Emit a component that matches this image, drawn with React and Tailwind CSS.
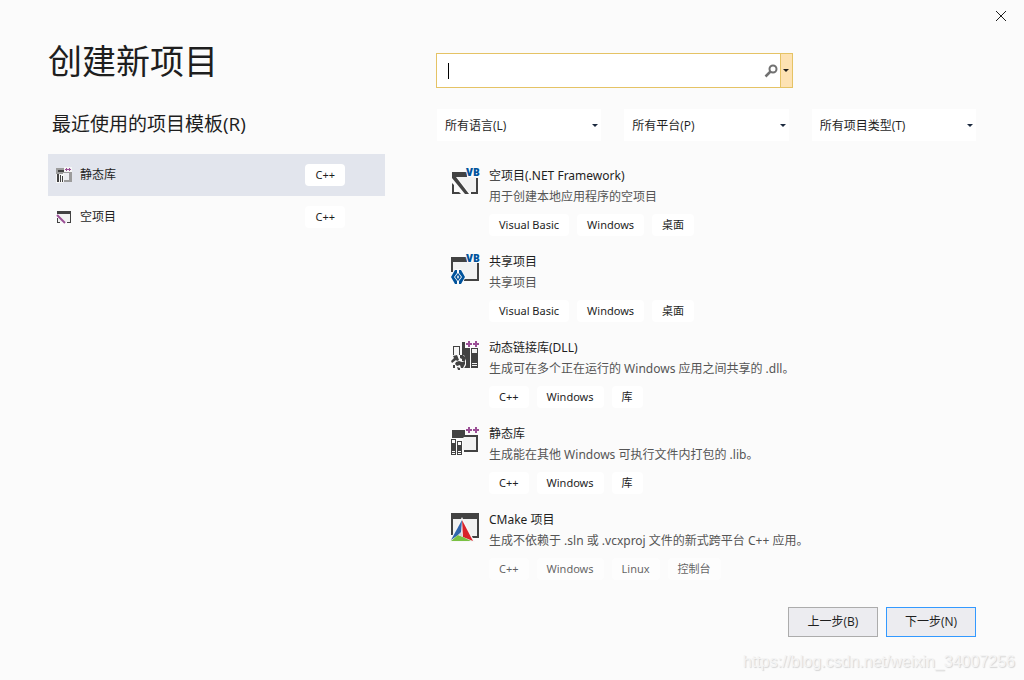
import { useState } from 'react';

const recentTemplates = [
  { name: '静态库', tag: 'C++', Icon: SmallLibraryIcon },
  { name: '空项目', tag: 'C++', Icon: SmallEmptyIcon },
];

const filters = [
  { id: 'language', label: '所有语言(L)' },
  { id: 'platform', label: '所有平台(P)' },
  { id: 'type', label: '所有项目类型(T)' },
];

const templates = [
  {
    name: '空项目(.NET Framework)',
    description: '用于创建本地应用程序的空项目',
    tags: ['Visual Basic', 'Windows', '桌面'],
    Icon: EmptyProjectIcon,
  },
  {
    name: '共享项目',
    description: '共享项目',
    tags: ['Visual Basic', 'Windows', '桌面'],
    Icon: SharedProjectIcon,
  },
  {
    name: '动态链接库(DLL)',
    description: '生成可在多个正在运行的 Windows 应用之间共享的 .dll。',
    tags: ['C++', 'Windows', '库'],
    Icon: DllIcon,
  },
  {
    name: '静态库',
    description: '生成能在其他 Windows 可执行文件内打包的 .lib。',
    tags: ['C++', 'Windows', '库'],
    Icon: LibraryIcon,
  },
  {
    name: 'CMake 项目',
    description: '生成不依赖于 .sln 或 .vcxproj 文件的新式跨平台 C++ 应用。',
    tags: ['C++', 'Windows', 'Linux', '控制台'],
    Icon: CMakeIcon,
    faded: true,
  },
];

function VbMark() {
  return (
    <text
      x="16"
      y="8"
      fontSize="10"
      fontWeight="900"
      fill="#00539c"
      stroke="#fbfbfb"
      strokeWidth="2"
      paintOrder="stroke"
      fontFamily="Noto Sans, sans-serif"
    >
      VB
    </text>
  );
}

function PlusPlus() {
  return (
    <>
      <path d="M15 0h15v8H15z" fill="#fbfbfb" />
      <path d="M18 1h2v2h2v2h-2v2h-2V5h-2V3h2zM25 1h2v2h2v2h-2v2h-2V5h-2V3h2z" fill="#9b4f96" />
    </>
  );
}

function EmptyProjectIcon() {
  return (
    <svg width="30" height="30" viewBox="0 0 30 30" className="overflow-visible" aria-hidden="true">
      <path d="M7 9h19v15h-7z" fill="#f2f2f2" />
      <path d="M2 4h15v5H6l13 17h-4L2 10z" fill="#424242" />
      <path d="M26 10h2v16h-7v-2h5zM2 15l2 2v7h5l2 2H2z" fill="#424242" />
      <VbMark />
    </svg>
  );
}

function SharedProjectIcon() {
  return (
    <svg width="30" height="30" viewBox="0 0 30 30" className="overflow-visible" aria-hidden="true">
      <path d="M3 8h24v17H3z" fill="#f2f2f2" />
      <path d="M1 3h16v5H3v10H1zM27 9h2v18H14v-2h13z" fill="#424242" />
      <path d="M5 15h6l5 8-5 8H5l-5-8z" fill="#fbfbfb" />
      <path d="M6 16h1v3l-3 4 3 4v3H5l-4-7 4-7zM10 16h1l4 7-4 7H9v-3l3-4-3-4v-3z" fill="#00539c" />
      <path d="M8 19l3 4-3 4-3-4z" fill="#00539c" />
      <path d="M8 21l1 2-1 2-1-2z" fill="#fbfbfb" />
    <VbMark />
    </svg>
  );
}

function DllIcon() {
  return (
    <svg width="30" height="30" viewBox="0 0 30 30" aria-hidden="true">
      <path d="M3 6h7v11H3z" fill="#424242" />
      <path d="M4 7h5v10H4z" fill="#f6f6f6" />
      <path d="M12 2h3v6h5v20h-8zM21 8h7v20h-7z" fill="#424242" />
      <path d="M22 9h5v4h-5zM22 23h5v1h-5zM22 25h5v1h-5z" fill="#f2f2f2" />
      <path d="M2 15h12l2 5v5l-3 5H2l-2-7z" fill="#fbfbfb" />
      <path d="M3 16l4-1 2 5-2 1-1-1-4 3-1-2 3-3zM10 15h3l3 3-1 3h-3v-2l-2-1zM9 21l3 1 3-1v3l-2 4h-2l-1-3-3 1-2-2 1-2zM3 25h2v3H3zM7 27l3 1v2H8z" fill="#424242" />
      <PlusPlus />
    </svg>
  );
}

function LibraryIcon() {
  return (
    <svg width="30" height="30" viewBox="0 0 30 30" aria-hidden="true">
      <path d="M4 10h22v14H4z" fill="#f2f2f2" />
      <path d="M2 4h13v5h13v17H14v-2h12V11H14l-1 1H2z" fill="#424242" />
      <path d="M0 12h13v17H0z" fill="#fbfbfb" />
      <path d="M1 13h5v16H1zM7 15h5v14H7z" fill="#424242" />
      <path d="M2 14h3v3H2zM2 25h3v1H2zM2 27h3v1H2zM8 16h3v3H8zM8 25h3v1H8zM8 27h3v1H8z" fill="#fbfbfb" />
      <PlusPlus />
    </svg>
  );
}

function CMakeIcon() {
  return (
    <svg width="30" height="30" viewBox="0 0 30 30" aria-hidden="true">
      <path d="M3 7h24v17H3z" fill="#f2f2f2" />
      <path d="M1 1h28v25h-8v-2h6V7H3v16H1z" fill="#424242" />
      <path d="M12 5L-1 30h26z" fill="#f6f6f6" />
      <path d="M12 8L1 28l10-7z" fill="#2f65ad" />
      <path d="M12 8l11 21-10-4z" fill="#d9222a" />
      <path d="M8 23l-7 6h20l-8-4z" fill="#7ac143" />
      <path d="M11 20l2 5-5-2z" fill="#d0d5dc" />
    </svg>
  );
}

function SmallLibraryIcon() {
  return (
    <svg width="16" height="16" viewBox="0 0 16 16" aria-hidden="true">
      <path d="M0 1h8V0h8v15H7v1H0z" fill="#f6f6f6" />
      <path d="M0 1h8v4h8v10H8v-2h5V6H7v1H0z" fill="#9c9c9c" />
      <path d="M2 3h6v2H2zM1 7h2v8H1zM4 8h1v7H4zM6 9h1v6H6z" fill="#424242" />
      <path d="M8 6h5v7H8z" fill="#eeeef2" />
      <path d="M8 0h8v5H8z" fill="#f6f6f6" />
      <path d="M10 1h1v1h1v1h-1v1h-1V3H9V2h1zM13 1h1v1h1v1h-1v1h-1V3h-1V2h1z" fill="#9b4f96" />
    </svg>
  );
}

function SmallEmptyIcon() {
  return (
    <svg width="16" height="16" viewBox="0 0 16 16" aria-hidden="true">
      <path d="M2 5h12v8H2z" fill="#f2f2f2" />
      <path d="M1 2h14v12h-4v-1h3V5H1zM1 9h1v4h2v1H1z" fill="#424242" />
      <path d="M1 6l8 8" fill="none" stroke="#9b4f96" strokeWidth="2" />
    </svg>
  );
}

function Arrow({ className }) {
  return (
    <svg width="6" height="3" viewBox="0 0 6 3" className={className} aria-hidden="true">
      <path d="M0 0h6L3 3z" fill="currentColor" />
    </svg>
  );
}

function Tag({ children }) {
  return (
    <span className="flex h-[22px] items-center rounded bg-white px-2.5 text-[11px] whitespace-nowrap text-[#1e1e1e]">
      {children}
    </span>
  );
}

export default function App() {
  const [search, setSearch] = useState('');

  return (
    <div className="relative flex min-h-screen flex-col bg-[#fbfbfb] font-['Noto_Sans','Noto_Sans_CJK_SC',sans-serif] text-xs text-[#1e1e1e]">
      <header className="flex h-8 items-center justify-end pr-[18px]">
        <button type="button" aria-label="关闭">
          <svg width="10" height="10" viewBox="0 0 10 10">
            <path d="M0 0l10 10M10 0L0 10" stroke="#1e1e1e" strokeWidth="1" />
          </svg>
        </button>
      </header>

      <main className="grid grid-cols-[337fr_540fr] gap-x-[51px] px-12">
        <section>
          <h1 className="mt-2 text-[34px] leading-[42px]">创建新项目</h1>
          <h2 className="mt-7 pl-1 font-['Open_Sans','Noto_Sans_CJK_SC',sans-serif] text-[19px] leading-7">
            最近使用的项目模板(R)
          </h2>
          <ul className="mt-4">
            {recentTemplates.map(({ name, tag, Icon }, i) => (
              <li key={name}>
                <button
                  type="button"
                  className={
                    i === 0
                      ? 'flex h-[42px] w-full items-center gap-2 bg-[#e2e5ed] pr-10 pl-2'
                      : 'flex h-[42px] w-full items-center gap-2 pr-10 pl-2'
                  }
                >
                  <Icon />
                  <span className="flex-1 text-left">{name}</span>
                  <Tag>{tag}</Tag>
                </button>
              </li>
            ))}
          </ul>
        </section>

        <section>
          <div className="mt-[21px] flex h-[35px] max-w-[357px] items-center border border-[#e5c365] bg-white pl-[11px]">
            <span className="h-4 w-px bg-black" />
            <input
              type="text"
              aria-label="搜索模板"
              value={search}
              onChange={(e) => setSearch(e.target.value)}
              className="h-full min-w-0 flex-1 bg-transparent outline-none"
            />
            <button type="button" aria-label="搜索" className="mr-[2px]">
              <svg width="14" height="14" viewBox="0 0 14 14">
                <circle cx="9" cy="5" r="3.5" fill="none" stroke="#717171" strokeWidth="2" />
                <path d="M6.5 7.5L1.5 12.5" stroke="#717171" strokeWidth="2.5" />
              </svg>
            </button>
            <button
              type="button"
              aria-label="搜索选项"
              className="flex h-full w-3 items-center border-l border-[#e5c365] bg-[#fde2b3] pl-[2px]"
            >
              <Arrow />
            </button>
          </div>

          <div className="mt-[21px] grid grid-cols-3 gap-[23px] pl-px">
            {filters.map(({ id, label }) => (
              <div key={id} className="relative">
                <select
                  aria-label={label}
                  className="h-8 w-full appearance-none bg-white pt-px pr-4 pl-2 font-['Open_Sans','Noto_Sans_CJK_SC',sans-serif] text-xs"
                >
                  <option>{label}</option>
                </select>
                <Arrow className="pointer-events-none absolute top-[15px] right-[3px] text-[#1b293e]" />
              </div>
            ))}
          </div>

          <ul className="mt-6 flex flex-col gap-[15px] pl-[14px]">
            {templates.map(({ name, description, tags, Icon, faded }) => (
              <li key={name} className="flex gap-[9px]">
                <div className="shrink-0 pt-[3px]">
                  <Icon />
                </div>
                <div>
                  <h3 className="leading-[21px]">{name}</h3>
                  <p className="leading-[21px] text-[#555555]">{description}</p>
                  <div className={faded ? 'mt-[7px] flex gap-2 opacity-70' : 'mt-[7px] flex gap-2'}>
                    {tags.map((tag) => (
                      <Tag key={tag}>{tag}</Tag>
                    ))}
                  </div>
                </div>
              </li>
            ))}
          </ul>
        </section>
      </main>

      <footer className="mt-[27px] flex justify-end gap-2 px-12 pb-[43px] font-['Open_Sans','Noto_Sans_CJK_SC',sans-serif]">
        <button type="button" className="h-[30px] w-[90px] border border-[#acacac] bg-[#ececf0]">
          上一步(B)
        </button>
        <button type="button" className="h-[30px] w-[90px] border border-[#3399ff] bg-[#ececf0]">
          下一步(N)
        </button>
      </footer>

      <p className="absolute right-[9px] bottom-2 font-['Liberation_Sans',sans-serif] text-base leading-5 text-[#f4f4f4] [text-shadow:1px_1px_1px_#d4d4d4]">
        https://blog.csdn.net/weixin_34007256
      </p>
    </div>
  );
}
